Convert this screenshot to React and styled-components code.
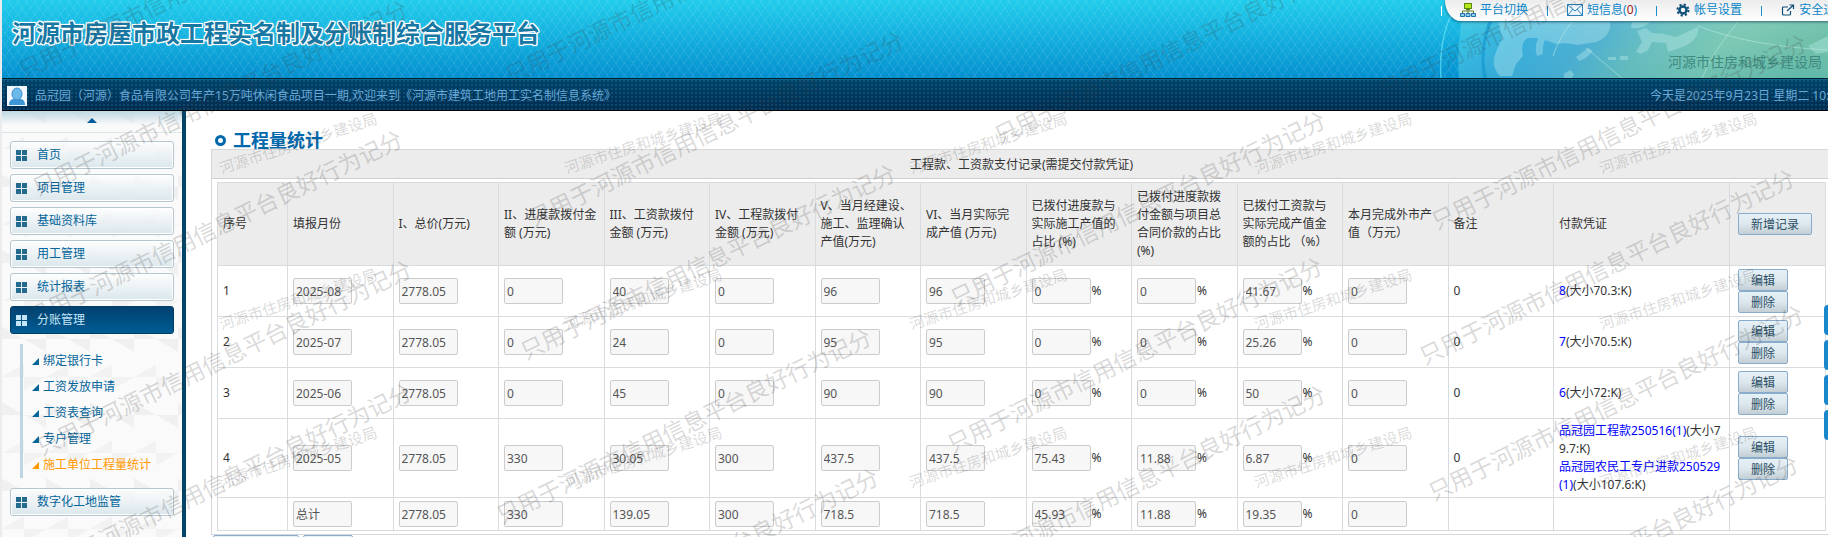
import React from "react";
import styled, { createGlobalStyle } from "styled-components";

const GlobalStyle = createGlobalStyle`
  * {
    box-sizing: border-box;
  }
  body {
    margin: 0;
    overflow: hidden;
    background: white;
    color: #333;
    font: 12px/18px "Noto Sans", "Noto Sans CJK SC", sans-serif;
  }
  button, input {
    font: inherit;
  }
  a {
    text-decoration: none;
  }
`;

const menuTop = ["首页", "项目管理", "基础资料库", "用工管理", "统计报表"];

const subMenu = [
  "绑定银行卡",
  "工资发放申请",
  "工资表查询",
  "专户管理",
  "施工单位工程量统计",
];

const columns = [
  "序号",
  "填报月份",
  "I、总价(万元)",
  "II、进度款拨付金额 (万元)",
  "III、工资款拨付金额 (万元)",
  "IV、工程款拨付金额 (万元)",
  "V、当月经建设、施工、监理确认产值(万元)",
  "VI、当月实际完成产值 (万元)",
  "已拨付进度款与实际施工产值的占比 (%)",
  "已拨付进度款拨付金额与项目总合同价款的占比 (%)",
  "已拨付工资款与实际完成产值金额的占比 （%）",
  "本月完成外市产值（万元）",
  "备注",
  "付款凭证",
];

const rows = [
  {
    values: ["2025-08", "2778.05", "0", "40", "0", "96", "96", "0", "0", "41.67", "0"],
    remark: "0",
    files: [{ name: "8", size: "(大小70.3:K)" }],
  },
  {
    values: ["2025-07", "2778.05", "0", "24", "0", "95", "95", "0", "0", "25.26", "0"],
    remark: "0",
    files: [{ name: "7", size: "(大小70.5:K)" }],
  },
  {
    values: ["2025-06", "2778.05", "0", "45", "0", "90", "90", "0", "0", "50", "0"],
    remark: "0",
    files: [{ name: "6", size: "(大小72:K)" }],
  },
  {
    values: ["2025-05", "2778.05", "330", "30.05", "300", "437.5", "437.5", "75.43", "11.88", "6.87", "0"],
    remark: "0",
    files: [
      { name: "品冠园工程款250516(1)", size: "(大小79.7:K)" },
      { name: "品冠园农民工专户进款250529(1)", size: "(大小107.6:K)" },
    ],
  },
];

const total = ["总计", "2778.05", "330", "139.05", "300", "718.5", "718.5", "45.93", "11.88", "19.35", "0"];

// value columns that are followed by a percent sign
const isPercent = (i) => i >= 7 && i <= 9;

// lower left corner of every long watermark
const longMarks = [
  [25, 82], [39, 199], [34, 329], [43, 459], [43, 582],
  [512, 87], [535, 230], [527, 363], [503, 527], [510, 667],
  [1001, 147], [957, 310], [954, 456], [957, 584],
  [1385, 102], [1438, 233], [1426, 368], [1435, 504], [1430, 654],
];

const shortMarks = [176, 332, 490].flatMap((y) =>
  [222, 567, 912, 1257, 1602].map((x) => [x, y])
);

export default function App() {
  return (
    <Page>
      <GlobalStyle />
      <Header />
      <UserBar>
        <Avatar />
        <span>
          品冠园（河源）食品有限公司年产15万吨休闲食品项目一期,欢迎来到《河源市建筑工地用工实名制信息系统》
        </span>
        <Today>今天是2025年9月23日 星期二 10:25:36</Today>
      </UserBar>
      <Body>
        <SideMenu />
        <Main>
          <Title>
            <Bullet />
            工程量统计
          </Title>
          <Panel>
            <PanelHead>工程款、工资款支付记录(需提交付款凭证)</PanelHead>
            <PanelBody>
              <RecordTable />
            </PanelBody>
          </Panel>
          <Actions>
            <Button type="button" $wide>新增工程量</Button>
            <Button type="button">返回</Button>
          </Actions>
        </Main>
      </Body>
      <FloatTabs>
        <FloatTab />
        <FloatTab />
        <FloatTab />
        <FloatTab />
      </FloatTabs>
      <Watermark />
    </Page>
  );
}

const Header = () => (
  <Top>
    <SiteName>河源市房屋市政工程实名制及分账制综合服务平台</SiteName>
    <TopRight>
      <Globe />
      <NavRow>
        <Separator $light />
        <Nav>
          <NavLink href="#platform">
            <NetworkIcon />
            平台切换
          </NavLink>
          <Separator />
          <NavLink href="#message">
            <MailIcon />
            <span>
              短信息(<Count>0</Count>)
            </span>
          </NavLink>
          <Separator />
          <NavLink href="#account">
            <GearIcon />
            帐号设置
          </NavLink>
          <Separator />
          <NavLink href="#logout">
            <ExitIcon />
            安全退出
          </NavLink>
        </Nav>
      </NavRow>
      <Bureau>河源市住房和城乡建设局</Bureau>
    </TopRight>
  </Top>
);

const SideMenu = () => (
  <Side>
    <ScrollUp type="button" aria-label="向上">
      <svg width="10" height="5" viewBox="0 0 10 5">
        <path d="M5 0L10 5H0z" fill="#005a9c" />
      </svg>
    </ScrollUp>
    <MenuList>
      {menuTop.map((name) => (
        <MenuLink href="#menu" key={name}>
          <TileIcon />
          {name}
        </MenuLink>
      ))}
      <MenuLink href="#menu" $active>
        <TileIcon />
        分账管理
      </MenuLink>
      <SubList>
        {subMenu.map((name, i) => (
          <SubLink href="#sub" key={name} $active={i === subMenu.length - 1}>
            <svg width="7" height="7" viewBox="0 0 7 7">
              <path d="M7 0V7H0z" fill="currentColor" />
            </svg>
            <span>{name}</span>
          </SubLink>
        ))}
      </SubList>
      <MenuLink href="#menu">
        <TileIcon />
        数字化工地监管
      </MenuLink>
    </MenuList>
  </Side>
);

const ValueCells = ({ values }) =>
  values.map((value, i) => (
    <Td key={i}>
      <Field>
        <ValueInput readOnly value={value} aria-label={columns[i + 1]} />
        {isPercent(i) && "%"}
      </Field>
    </Td>
  ));

const RecordTable = () => (
  <Table>
    <colgroup>
      <Col $w={70} />
      {columns.slice(1, 13).map((name) => (
        <Col key={name} />
      ))}
      <Col $w={176} />
      <Col $w={96} />
    </colgroup>
    <thead>
      <tr>
        {columns.map((name) => (
          <Th key={name}>{name}</Th>
        ))}
        <Th>
          <ButtonStack>
            <Button type="button">新增记录</Button>
          </ButtonStack>
        </Th>
      </tr>
    </thead>
    <tbody>
      {rows.map((row, i) => (
        <tr key={i}>
          <Td>{i + 1}</Td>
          <ValueCells values={row.values} />
          <Td>{row.remark}</Td>
          <FileCell>
            {row.files.map((file) => (
              <div key={file.name}>
                <FileLink href="#file">{file.name}</FileLink>
                {file.size}
              </div>
            ))}
          </FileCell>
          <Td>
            <ButtonStack>
              <Button type="button">编辑</Button>
              <Button type="button">删除</Button>
            </ButtonStack>
          </Td>
        </tr>
      ))}
      <tr>
        <Td />
        <ValueCells values={total} />
        <Td />
        <Td />
        <Td />
      </tr>
    </tbody>
  </Table>
);

const Watermark = () => (
  <MarkLayer aria-hidden="true">
    {longMarks.map(([x, y]) => (
      <Mark key={`${x}-${y}`} $long style={{ left: x, bottom: `calc(100% - ${y}px)` }}>
        只用于河源市信用信息平台良好行为记分
      </Mark>
    ))}
    {shortMarks.map(([x, y]) => (
      <Mark key={`${x}-${y}`} style={{ left: x, bottom: `calc(100% - ${y}px)` }}>
        河源市住房和城乡建设局
      </Mark>
    ))}
  </MarkLayer>
);

const Avatar = () => (
  <svg width="20" height="20" viewBox="0 0 20 20">
    <rect width="20" height="20" fill="#f2f8fd" />
    <path d="M2 19c0-4 2-6 5-6h6c3 0 5 2 5 6z" fill="#3d97d6" />
    <ellipse cx="10" cy="8" rx="5" ry="6" fill="#6bb8ea" stroke="#3d8fcd" />
  </svg>
);

const TileIcon = () => (
  <svg width="11" height="11" viewBox="0 0 11 11" fill="currentColor">
    <path d="M0 0h5v5H0zM6 0h5v5H6zM0 6h5v5H0zM6 6h5v5H6z" />
  </svg>
);

const NetworkIcon = () => (
  <svg width="16" height="14" viewBox="0 0 16 14" fill="none">
    <rect x="4.500" y=".5" width="7" height="5" fill="#b6e61c" stroke="#5b8a10" />
    <path d="M8 6v2M2.500 10V8h11v2M8 8v2M6 6.500h4" stroke="#5b7f1c" />
    <path d="M.5 10.500h4v3h-4zM6 10.500h4v3H6zM11.500 10.500h4v3h-4z" fill="#8fd0f5" stroke="#1d6fae" />
  </svg>
);

const MailIcon = () => (
  <svg width="16" height="12" viewBox="0 0 16 12" fill="#eef8fe" stroke="#2a80b8">
    <rect x=".5" y=".5" width="15" height="11" />
    <path d="M1 1l7 6 7-6M1 11l5-6M15 11l-5-6" fill="none" />
  </svg>
);

const GearIcon = () => (
  <svg width="14" height="14" viewBox="0 0 14 14" fill="none" stroke="#0d4f78">
    <circle cx="7" cy="7" r="3.500" strokeWidth="2.500" />
    <circle cx="7" cy="7" r="5.500" strokeWidth="2" strokeDasharray="2.160 2.160" />
  </svg>
);

const ExitIcon = () => (
  <svg width="14" height="12" viewBox="0 0 14 12" fill="none" stroke="#0d4f78" strokeWidth="1.200">
    <path d="M7 3H2.500q-1 0-1 1v6q0 1 1 1h6q1 0 1-1V7M6 7l6-5.500M8.500 1H12.500V5" />
  </svg>
);

const Globe = () => (
  <GlobeArt viewBox="60 0 388 78" preserveAspectRatio="xMaxYMin slice">
    <defs>
      <linearGradient id="sea" x1="0" y1="0.300" x2="1" y2="0.500">
        <stop offset="0" stopColor="#2fc8ec" />
        <stop offset="0.200" stopColor="#35aee0" />
        <stop offset="0.380" stopColor="#4aaed6" />
        <stop offset="0.550" stopColor="#6cc0bf" />
        <stop offset="0.750" stopColor="#80cab2" />
        <stop offset="1" stopColor="#70c0a6" />
      </linearGradient>
      <linearGradient id="deep" x1="0" y1="0" x2="0" y2="1">
        <stop offset="0" stopColor="#a8e4dc" stopOpacity="0.500" />
        <stop offset="0.500" stopColor="#66bfc0" stopOpacity="0.100" />
        <stop offset="1" stopColor="#2a9ab8" stopOpacity="0.200" />
      </linearGradient>
    </defs>
    <path d="M86 0Q76 40 79 78H448V0z" fill="url(#sea)" />
    <path d="M86 0Q76 40 79 78H448V0z" fill="url(#deep)" />
    <path d="M73 10Q58 42 61 78" fill="none" stroke="#5fe0f3" strokeOpacity="0.700" strokeWidth="1.500" />
    <path d="M112 22Q100 50 107 78H103Q98 50 108 22z" fill="#0f93d0" fillOpacity="0.600" />
    <g fill="#c5f0f2" fillOpacity="0.350">
      <path d="M118 22H230Q232 36 216 42L198 45Q184 42 176 44L165 40Q162 46 163 54L157 56Q154 48 158 38L148 38Q140 42 143 56L136 64L132 76H120Q110 66 116 52L122 38z" />
      <path d="M196 57L208 48L213 51L206 58L199 61z" />
      <path d="M252 22H270Q262 30 251 28z" />
      <path d="M257 31L266 28L272 33L284 34L296 37L318 27Q320 38 305 46L288 52L286 43L272 42L268 50L261 54L256 52L262 42z" />
      <path d="M228 57h8v3h-8zM240 56h8v4h-8zM184 74l6-4 4 4-2 4h-8z" />
      <path d="M428 46l20-10v16l-12 2z" />
    </g>
    <path d="M173 56Q180 36 192 22M206 48L242 78M318 26Q370 46 448 50M358 22Q334 50 322 78" fill="none" stroke="#c5f0e8" strokeOpacity="0.500" />
  </GlobeArt>
);

const Page = styled.div`
  position: relative;
  display: flex;
  flex-direction: column;
  height: 100vh;
  overflow: hidden;
  border-left: 2px solid #e9edf0;
`;

const Top = styled.header`
  display: flex;
  justify-content: space-between;
  height: 78px;
  flex: none;
  background: repeating-linear-gradient(55deg, rgba(255, 255, 255, 0.08) 0 1px, transparent 1px 7px),
    repeating-linear-gradient(-55deg, rgba(255, 255, 255, 0.08) 0 1px, transparent 1px 7px),
    linear-gradient(#22cdec, #0590d0);
`;

const SiteName = styled.h1`
  margin: 0;
  padding: 16px 0 0 10px;
  color: #1878a4;
  font-size: 24px;
  line-height: 34px;
  text-shadow: 1px 0 white, -1px 0 white, 0 1px white, 0 -1px white, 1px 1px white,
    -1px -1px white, 1px -1px white, -1px 1px white, 0 0 3px white;
  white-space: nowrap;
`;

const TopRight = styled.div`
  position: relative;
  width: 388px;
  flex: none;
  overflow: hidden;
`;

const GlobeArt = styled.svg`
  position: absolute;
  inset: 0;
  width: 100%;
  height: 100%;
`;

const NavRow = styled.div`
  position: relative;
  display: flex;
  align-items: flex-start;
  gap: 3px;
  padding-left: 1px;
`;

const Nav = styled.nav`
  display: flex;
  flex: none;
  gap: 19px;
  height: 21px;
  padding-left: 15px;
  background: linear-gradient(#ececec, white);
  border-bottom-left-radius: 16px 21px;
  box-shadow: 0 1px 3px rgba(0, 40, 70, 0.6);
`;

const NavLink = styled.a`
  display: flex;
  align-items: center;
  gap: 4px;
  height: 20px;
  color: #0a86c8;
  white-space: nowrap;
`;

const Count = styled.span`
  color: #a01c1c;
`;

const Separator = styled.span`
  flex: none;
  width: 1px;
  height: 10px;
  margin-top: 6px;
  background: ${({ $light }) => ($light ? "white" : "#1b8fc9")};
`;

const Bureau = styled.div`
  position: relative;
  padding: 30px 6px 0 0;
  color: #3f8a80;
  font-size: 14px;
  line-height: 22px;
  text-align: right;
`;

const UserBar = styled.div`
  display: flex;
  align-items: center;
  gap: 8px;
  height: 33px;
  flex: none;
  padding: 2px 0 0 5px;
  border-top: 1px solid #00202f;
  border-bottom: 1px solid black;
  background: radial-gradient(rgba(40, 130, 170, 0.3) 1px, transparent 1px) 0 0 / 4px 4px,
    linear-gradient(#004469, #002b50);
  box-shadow: inset 0 1px #0a6288;
  color: #6aa9d8;
  white-space: nowrap;
`;

const Today = styled.span`
  width: 178px;
  margin-left: auto;
  overflow: hidden;
`;

const Body = styled.div`
  display: flex;
  flex: 1;
  min-height: 0;
`;

const Side = styled.aside`
  width: 184px;
  flex: none;
  border-right: 4px solid #004469;
  background: linear-gradient(#bfd8e4, rgba(255, 255, 255, 0) 14px),
    linear-gradient(30deg, rgba(0, 0, 0, 0.04) 12%, transparent 13% 87%, rgba(0, 0, 0, 0.04) 88%) 0 0 / 44px 76px,
    linear-gradient(150deg, rgba(0, 0, 0, 0.03) 12%, transparent 13% 87%, rgba(0, 0, 0, 0.03) 88%) 22px 38px / 44px 76px,
    #fafafa;
`;

const ScrollUp = styled.button`
  display: flex;
  justify-content: center;
  width: 100%;
  height: 22px;
  padding: 7px 0 0;
  border: 0;
  border-bottom: 1px solid rgba(190, 210, 220, 0.5);
  background: transparent;
`;

const MenuList = styled.nav`
  display: flex;
  flex-direction: column;
  gap: 5px;
  padding: 8px 8px 0;
`;

const MenuLink = styled.a`
  display: flex;
  align-items: center;
  gap: 10px;
  height: 28px;
  padding-left: 5px;
  border: 1px solid ${({ $active }) => ($active ? "#003d66" : "#b4c6d0")};
  border-radius: 3px;
  background: ${({ $active }) =>
    $active
      ? "linear-gradient(#004270, #005c94)"
      : "linear-gradient(rgba(255, 255, 255, 0.7), #dbe7ec)"};
  box-shadow: ${({ $active }) => ($active ? "none" : "inset 0 0 0 1px white")};
  color: ${({ $active }) => ($active ? "#c4e6f8" : "#04659a")};

  svg {
    color: ${({ $active }) => ($active ? "#c4e6f8" : "#24698e")};
  }
`;

const SubList = styled.div`
  display: flex;
  flex-direction: column;
  margin: 5px 0 5px 10px;
  padding: 4px 0 0 9px;
  border-left: 3px solid #bcd6e2;
`;

const SubLink = styled.a`
  display: flex;
  align-items: center;
  gap: 4px;
  height: 26px;
  color: ${({ $active }) => ($active ? "#ff9900" : "#04659a")};
  white-space: nowrap;
`;

const Main = styled.main`
  flex: 1;
  min-width: 0;
  padding-left: 25px;
`;

const Title = styled.h2`
  display: flex;
  align-items: center;
  gap: 7px;
  margin: 0;
  padding: 20px 0 0 4px;
  color: #0068ac;
  font-size: 18px;
  line-height: 18px;
`;

const Bullet = styled.span`
  width: 11px;
  height: 11px;
  border: 3px solid #0068ac;
  border-radius: 50%;
`;

/* the panel runs a little past the right edge of the frame */
const Panel = styled.section`
  margin-right: -4px;
  border: 1px solid #d8d8d8;
`;

const PanelHead = styled.div`
  height: 29px;
  border-bottom: 1px solid #d0d0d0;
  background: #ececec;
  line-height: 30px;
  text-align: center;
`;

const PanelBody = styled.div`
  padding: 3px 5px;
`;

const Table = styled.table`
  width: 100%;
  border-collapse: collapse;
  table-layout: fixed;
`;

const Col = styled.col`
  width: ${({ $w }) => ($w ? `${$w}px` : "auto")};
`;

const Th = styled.th`
  height: 83px;
  padding: 5px;
  border: 1px solid #d8dcdf;
  background: #ececec;
  font-weight: normal;
  text-align: left;
`;

const Td = styled.td`
  padding: 3px 5px;
  border: 1px solid #d8dcdf;
`;

const FileCell = styled(Td)`
  padding-right: 0;
  word-break: break-all;
`;

const FileLink = styled.a`
  color: #0000ff;
`;

const Field = styled.div`
  display: flex;
  align-items: center;
  gap: 1px;
`;

const ValueInput = styled.input`
  width: 59px;
  height: 26px;
  padding: 0 2px;
  border: 1px solid #ccc;
  border-radius: 2px;
  background: #f7f7f7;
  color: #555;
`;

const ButtonStack = styled.div`
  display: flex;
  flex-direction: column;
  align-items: flex-start;
  padding-left: 3px;
`;

const Button = styled.button`
  min-width: ${({ $wide }) => ($wide ? "86px" : "50px")};
  height: 22px;
  padding: 2px 12px 0;
  border: 1px solid #8aaccc;
  border-radius: 2px;
  background: linear-gradient(#e6f0f7, #dce8ee 50%, #c3ced5);
  color: #2c4f66;
  line-height: 18px;
`;

const Actions = styled.div`
  display: flex;
  gap: 4px;
  padding-left: 2px;
`;

const FloatTabs = styled.aside`
  position: absolute;
  top: 305px;
  right: 0;
  display: flex;
  flex-direction: column;
  gap: 5px;
`;

const FloatTab = styled.span`
  width: 4px;
  height: 30px;
  border-radius: 4px 0 0 4px;
  background: #1a86cc;
`;

const MarkLayer = styled.div`
  position: absolute;
  inset: 0 0 0 -2px;
  overflow: hidden;
  pointer-events: none;
`;

const Mark = styled.span`
  position: absolute;
  color: rgba(60, 60, 60, 0.2);
  font-size: ${({ $long }) => ($long ? "23px" : "15px")};
  line-height: 1;
  white-space: nowrap;
  transform: rotate(${({ $long }) => ($long ? "-26deg" : "-18deg")});
  transform-origin: 0 100%;
`;
